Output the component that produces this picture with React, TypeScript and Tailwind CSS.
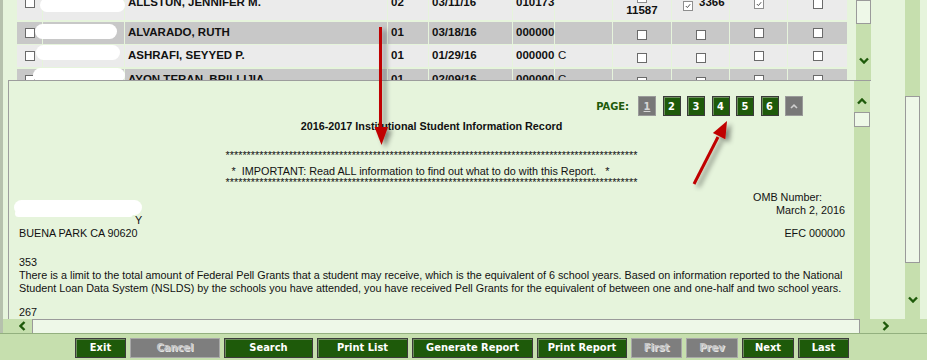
import React from "react";

type Dir = "up" | "down" | "left" | "right";

function Chevron({ dir, color = "#1e5a0a", className = "" }: { dir: Dir; color?: string; className?: string }) {
  const horiz = dir === "left" || dir === "right";
  const pts = {
    down: "1,1.5 5,5.5 9,1.5",
    up: "1,5.5 5,1.5 9,5.5",
    left: "5.5,1 1.5,5 5.5,9",
    right: "1.5,1 5.5,5 1.5,9",
  }[dir];
  return (
    <svg
      width={horiz ? 7 : 10}
      height={horiz ? 10 : 7}
      viewBox={horiz ? "0 0 7 10" : "0 0 10 7"}
      className={`shrink-0 ${className}`}
    >
      <polyline points={pts} fill="none" stroke={color} strokeWidth="2.4" />
    </svg>
  );
}

function Check({ on = false, soft = false, className = "" }: { on?: boolean; soft?: boolean; className?: string }) {
  return (
    <span
      className={`flex h-[10px] w-[10px] shrink-0 items-center justify-center border bg-white ${
        soft ? "border-[#8e8e8e]" : "border-[#6a6a6a]"
      } ${className}`}
    >
      {on && (
        <svg width="6" height="6" viewBox="0 0 6 6">
          <polyline points="0.8,3 2.4,4.6 5.2,1.2" fill="none" stroke="#555" strokeWidth="1" />
        </svg>
      )}
    </span>
  );
}

const rows = [
  { name: "ALLSTUN, JENNIFER M.", a: "02", d: "03/11/16", code: "010173", c: "", blob: { l: 23, t: 12, w: 85, h: 14 } },
  { name: "ALVARADO, RUTH", a: "01", d: "03/18/16", code: "000000", c: "", blob: { l: 18, t: 2, w: 82, h: 15 } },
  { name: "ASHRAFI, SEYYED P.", a: "01", d: "01/29/16", code: "000000", c: "C", blob: { l: 19, t: 0, w: 84, h: 15 } },
  { name: "AYON TERAN, BRILLIJIA", a: "01", d: "02/09/16", code: "000000", c: "C", blob: { l: 16, t: -1, w: 92, h: 15 } },
];

function RosterTable() {
  return (
    <div className="mt-[-14px] flex w-[830px] shrink-0 flex-col gap-[1.5px] text-[11.5px] font-bold">
      {rows.map((r, i) => {
        const first = i === 0;
        const bg = i % 2 === 0 ? "bg-[#ebebeb]" : "bg-[#c8c8c8]";
        const cell = `flex items-center px-[3px] ${bg}`;
        return (
          <div
            key={r.name}
            className={`relative grid grid-cols-[25px_81px_262px_40px_83px_41px_57px_58px_57px_57px_59px] gap-x-px ${
              first ? "h-[34px]" : "h-[22px]"
            }`}
          >
            <div className={`${cell} pl-[8px]`}>
              <Check />
            </div>
            <div className={cell} />
            <div className={cell}>{r.name}</div>
            <div className={`${cell} px-[2px]`}>{r.a}</div>
            <div className={cell}>{r.d}</div>
            <div className={`${cell} px-[2px]`}>{r.code}</div>
            <div className={`${cell} font-normal`}>{r.c}</div>
            {first ? (
              <>
                <div className={`${bg} flex flex-col items-center`}>
                  <div className="mt-[7px] flex flex-col items-center gap-[1px]">
                    <Check on soft />
                    <span className="leading-[13px]">11587</span>
                  </div>
                </div>
                <div className={`${cell} gap-[6px] pl-[11px]`}>
                  <Check on soft className="mt-[6px]" />
                  <span>3366</span>
                </div>
                <div className={`${cell} justify-center`}>
                  <Check on soft className="mt-[2px]" />
                </div>
                <div className={`${cell} justify-center`}>
                  <Check className="mt-[2px]" />
                </div>
              </>
            ) : (
              <>
                <div className={`${cell} justify-center`}>
                  <Check className="mt-[4px]" />
                </div>
                <div className={`${cell} justify-center`}>
                  <Check className="mt-[4px]" />
                </div>
                <div className={`${cell} justify-center`}>
                  <Check />
                </div>
                <div className={`${cell} justify-center`}>
                  <Check />
                </div>
              </>
            )}
            <span
              className="absolute rounded-full bg-white"
              style={{ left: r.blob.l, top: r.blob.t, width: r.blob.w, height: r.blob.h }}
            />
          </div>
        );
      })}
    </div>
  );
}

const btnFont = "font-['DejaVu_Sans_Condensed','DejaVu_Sans',sans-serif] font-bold";

function PageButtons() {
  const pages = ["1", "2", "3", "4", "5", "6"];
  return (
    <div className="flex h-[20px] items-center justify-end pr-[51px]">
      <span className={`${btnFont} mr-[9px] text-[11px] text-[#1e5a0a]`}>PAGE:</span>
      <div className="flex gap-[6.5px]">
        {pages.map((p) =>
          p === "1" ? (
            <span
              key={p}
              className={`${btnFont} flex h-[20px] w-[18px] items-center justify-center border border-[#9a9a9a] bg-[#787878] text-[11px] text-[#d6d6d6] underline`}
            >
              {p}
            </span>
          ) : (
            <span
              key={p}
              className={`${btnFont} flex h-[20px] w-[18px] items-center justify-center border border-[#3a3a3a] bg-[#1e5a0a] text-[11px] text-white shadow-[inset_1px_1px_0_#6d8d5d]`}
            >
              {p}
            </span>
          )
        )}
        <span className="flex h-[20px] w-[18px] items-center justify-center border border-[#9a9a9a] bg-[#787878]">
          <svg width="8" height="5" viewBox="0 0 8 5">
            <polyline points="1,4 4,1.2 7,4" fill="none" stroke="#d0d0d0" strokeWidth="1.6" />
          </svg>
        </span>
      </div>
    </div>
  );
}

function ReportPanel() {
  const stars = "*".repeat(98);
  return (
    <div className="absolute left-[5px] top-[80px] flex h-[239px] w-[863px] border-l border-t border-[#9d9d9d] bg-[#e6f4dc]">
      <div className="relative w-[845px] shrink-0 overflow-hidden pt-[15px] text-[10.8px] leading-[13px] text-[#111]">
        <PageButtons />
        <p className="mt-[4px] text-center font-bold">2016-2017 Institutional Student Information Record</p>
        <div className="flex justify-center">
          <div className="whitespace-pre">
            <p className="mt-[15.5px]">{stars}</p>
            <p className="mt-[3px]">{"  *  IMPORTANT: Read ALL information to find out what to do with this Report.   *"}</p>
            <p className="mt-[-2px]">{stars}</p>
          </div>
        </div>
        <div className="mt-[2.5px] flex items-start justify-between">
          <div className="relative pl-[10px] pt-[10px]">
            <p className="h-[13px]" />
            <p className="pl-[116px]">Y</p>
            <p>BUENA PARK CA 90620</p>
            <span className="absolute left-[5px] top-[9px] h-[15px] w-[128px] rounded-full bg-white" />
            <span className="absolute left-[6px] top-[19px] h-[7px] w-[118px] rounded-full bg-white" />
          </div>
          <div className="pr-[9px] text-right">
            <p className="pr-[23px]">OMB Number:</p>
            <p>March 2, 2016</p>
            <p className="mt-[10px]">EFC 000000</p>
          </div>
        </div>
        <div className="whitespace-nowrap pl-[10px]">
          <p className="mt-[16px]">353</p>
          <p>
            There is a limit to the total amount of Federal Pell Grants that a student may receive, which is the
            equivalent of 6 school years. Based on information reported to the National
          </p>
          <p>
            Student Loan Data System (NSLDS) by the schools you have attended, you have received Pell Grants for the
            equivalent of between one and one-half and two school years.
          </p>
          <p className="mt-[10.5px]">267</p>
        </div>
      </div>
      <div className="flex w-[16px] shrink-0 flex-col items-center bg-[#c6dfae] pt-[17px]">
        <Chevron dir="up" />
        <div className="mt-[7px] h-[15px] w-full border border-[#9a9a9a] bg-[#eef8e8]" />
      </div>
    </div>
  );
}

const buttons: { label: string; w: number; on: boolean }[] = [
  { label: "Exit", w: 51, on: true },
  { label: "Cancel", w: 90, on: false },
  { label: "Search", w: 89, on: true },
  { label: "Print List", w: 91, on: true },
  { label: "Generate Report", w: 121, on: true },
  { label: "Print Report", w: 90, on: true },
  { label: "First", w: 51, on: false },
  { label: "Prev", w: 52, on: false },
  { label: "Next", w: 52, on: true },
  { label: "Last", w: 51, on: true },
];

function Toolbar() {
  return (
    <div className="flex h-[27px] gap-[4px] border-t border-[#93b07f] bg-[#c6dfae] pl-[75px] pt-[4px]">
      {buttons.map((b) => (
        <button
          key={b.label}
          type="button"
          style={{ width: b.w }}
          className={`${btnFont} flex h-[20px] items-center justify-center text-[11px] ${
            b.on
              ? "border border-[#3c3c3c] bg-[#1e5a0a] text-white shadow-[inset_1px_1px_0_#6d8d5d]"
              : "border border-[#a8a8a8] bg-[#7e7e7e] text-[#c4c4c4] [text-shadow:1px_1px_0_#e6e6e6]"
          }`}
        >
          {b.label}
        </button>
      ))}
    </div>
  );
}

export default function App() {
  return (
    <div className="relative h-[360px] w-[927px] overflow-hidden bg-[#e6f4dc] font-['Liberation_Sans',Arial,sans-serif] text-[#111]">
      <div className="flex h-[319px]">
        <div className="w-[3px] shrink-0 bg-[#b6c1ad]" />
        <div className="relative w-[902px] shrink-0 overflow-hidden">
          <div className="flex items-start pl-[14px]">
            <RosterTable />
            <div className="ml-[9px] flex h-[80px] w-[15px] shrink-0 flex-col items-center bg-[#c6dfae]">
              <div className="h-[24px] w-full border border-[#9a9a9a] bg-[#eef8e8]" />
              <Chevron dir="down" className="mt-[33px]" />
            </div>
          </div>
          <ReportPanel />
        </div>
        <div className="flex w-[15px] shrink-0 flex-col items-center bg-[#c6dfae]">
          <div className="mt-[96px] h-[167px] w-full border border-[#9a9a9a] bg-[#eef8e8]" />
          <Chevron dir="down" className="mt-[33px]" />
        </div>
      </div>

      <div className="flex h-[14px]">
        <div className="w-[3px] shrink-0 bg-[#b6c1ad]" />
        <div className="flex w-[29px] shrink-0 items-center justify-center bg-[#c6dfae] pl-[9px]">
          <Chevron dir="left" />
        </div>
        <div className="w-[828px] shrink-0 border-l border-r border-t border-[#9a9a9a] bg-[#eef8e8]" />
        <div className="flex flex-1 items-center bg-[#c6dfae] pl-[22px]">
          <Chevron dir="right" />
        </div>
      </div>

      <Toolbar />

      <svg className="pointer-events-none absolute left-0 top-0" width="927" height="360" viewBox="0 0 927 360">
        <defs>
          <filter id="arrowShadow" x="-50%" y="-50%" width="200%" height="200%">
            <feDropShadow dx="4" dy="3" stdDeviation="2.5" floodColor="#000" floodOpacity="0.45" />
          </filter>
        </defs>
        <g filter="url(#arrowShadow)" fill="#c00000" stroke="#c00000">
          <line x1="380.5" y1="27" x2="380.5" y2="130" strokeWidth="3" />
          <polygon points="374.5,127 388,127 381.5,145" stroke="none" />
          <line x1="694" y1="184" x2="718" y2="137" strokeWidth="3" />
          <polygon points="727,121 725.3,139.3 712.9,132.9" stroke="none" />
        </g>
      </svg>
    </div>
  );
}
